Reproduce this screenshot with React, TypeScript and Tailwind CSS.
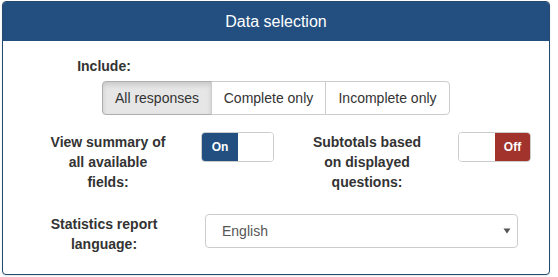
import React from "react";

const font = { fontFamily: '"Liberation Sans", Arial, sans-serif' };

function Toggle({ on }: { on: boolean }) {
  return (
    <div className="flex h-[30px] w-[73px] overflow-hidden rounded-[4px] border border-[#cccccc] bg-white">
      {on ? (
        <>
          <div className="flex w-[36px] items-center justify-center bg-[#234f80] text-[12px] font-bold text-white">On</div>
          <div className="flex-1 bg-white" />
        </>
      ) : (
        <>
          <div className="w-[36px] bg-white" />
          <div className="flex flex-1 items-center justify-center bg-[#a1322c] text-[12px] font-bold text-white">Off</div>
        </>
      )}
    </div>
  );
}

export default function App() {
  return (
    <div className="h-[277px] w-[558px] bg-white pl-[2px] pt-[1px] text-[#333333]" style={font}>
      <div className="h-[274px] w-[548px] overflow-hidden rounded-[4px] border border-[#26496f] bg-white shadow-[0_1px_2px_rgba(0,0,0,0.1)]">
        <div className="flex h-[39px] items-center justify-center bg-[#234f80] text-[16px] text-white">
          Data selection
        </div>
        <div className="px-[15px] pt-[15px]">
          <div className="flex pl-[26px]">
            <div className="w-[120px] text-center text-[14px] font-bold leading-[20px]">Include:</div>
          </div>
          <div className="mt-[5px] flex justify-center">
            <div className="flex h-[34px] text-[14px]">
              <div className="flex w-[110px] items-center justify-center rounded-l-[4px] border border-[#adadad] bg-[#e6e6e6] shadow-[inset_0_3px_5px_rgba(0,0,0,0.125)]">
                All responses
              </div>
              <div className="-ml-px flex w-[115px] items-center justify-center border border-[#cccccc] bg-white">
                Complete only
              </div>
              <div className="-ml-px flex w-[125px] items-center justify-center rounded-r-[4px] border border-[#cccccc] bg-white">
                Incomplete only
              </div>
            </div>
          </div>
          <div className="mt-[17px] flex items-start pl-[30px]">
            <div className="w-[120px] text-center text-[14px] font-bold leading-[20px]">
              View summary of all available fields:
            </div>
            <div className="ml-[33px]">
              <Toggle on={true} />
            </div>
            <div className="ml-[33px] w-[120px] text-center text-[14px] font-bold leading-[20px]">
              Subtotals based on displayed questions:
            </div>
            <div className="ml-[31px]">
              <Toggle on={false} />
            </div>
          </div>
          <div className="mt-[22px] flex items-start pl-[26px]">
            <div className="w-[120px] text-center text-[14px] font-bold leading-[20px]">
              Statistics report language:
            </div>
            <div className="ml-[41px] flex h-[34px] w-[313px] items-center justify-between rounded-[4px] border border-[#cccccc] bg-white pl-[16px] pr-[6px] text-[14px] text-[#555555]">
              <span>English</span>
              <svg width="8" height="6" viewBox="0 0 8 6">
                <path d="M0.5 0.5 L7.5 0.5 L4 5.5 Z" fill="#555555" />
              </svg>
            </div>
          </div>
        </div>
      </div>
    </div>
  );
}
